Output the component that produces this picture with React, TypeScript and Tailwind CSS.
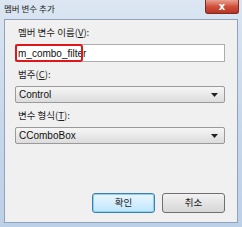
import React from 'react';

const kr = { fontFamily: '"Noto Sans CJK KR", "Noto Sans", sans-serif' };
const latin = { fontFamily: '"Liberation Sans", Arial, sans-serif' };

function Combo({ value }: { value: string }) {
  return (
    <div className="h-[17px] w-[210px] rounded-[2px] border border-[#9a9a9a] bg-gradient-to-b from-[#f6f6f6] to-[#dcdcdc] flex items-center justify-between pl-[3px] pr-[6px]">
      <span className="text-[10px] leading-[13px] text-[#111]" style={latin}>{value}</span>
      <svg width="7" height="4" viewBox="0 0 7 4">
        <path d="M0 0 H7 L3.5 4 Z" fill="#222" />
      </svg>
    </div>
  );
}

export default function App() {
  return (
    <div className="w-[242px] h-[227px] flex flex-col bg-gradient-to-b from-[#dbe6f2] via-[#c9d8eb] to-[#bcd0e8] overflow-hidden" style={kr}>
      {/* Title bar */}
      <div className="h-[19px] flex items-start justify-between pl-[4px] pr-[3px]">
        <span className="text-[8.5px] leading-[17px] text-[#1a1a1a]">멤버 변수 추가</span>
        <div className="w-[34px] h-[14px] rounded-b-[3px] border border-[#7a2a20] border-t-0 bg-gradient-to-b from-[#e8a090] via-[#d0503c] to-[#b83422] flex items-center justify-center">
          <span className="text-white text-[10px] font-bold leading-none" style={{ fontFamily: '"DejaVu Sans", sans-serif' }}>x</span>
        </div>
      </div>

      {/* Client area */}
      <div className="flex-1 mx-[4px] mb-[4px] border border-[#8fa3bd] bg-[#f0f0f0] flex flex-col pl-[10px] pt-[5px]">
        <span className="text-[9.5px] leading-[15px] text-[#222] pl-[3px]">멤버 변수 이름(<u>V</u>):</span>
        <div className="mt-[4px] h-[18px] w-[210px] border border-[#abadb3] bg-white relative flex items-center">
          <div className="absolute left-[-1px] top-[-1px] h-[18px] w-[68px] rounded-[3px] border-2 border-[#e0161a]" />
          <span className="text-[10px] leading-[13px] text-[#111] pl-[2px]" style={latin}>m_combo_filter</span>
        </div>

        <span className="mt-[5px] text-[9.5px] leading-[15px] text-[#222] pl-[3px]">범주(<u>C</u>):</span>
        <div className="mt-[4px]">
          <Combo value="Control" />
        </div>

        <span className="mt-[5px] text-[9.5px] leading-[15px] text-[#222] pl-[3px]">변수 형식(<u>T</u>):</span>
        <div className="mt-[4px]">
          <Combo value="CComboBox" />
        </div>

        <div className="mt-auto mb-[9px] flex justify-end gap-[7px] pr-[12px]">
          <button className="w-[63px] h-[20px] rounded-[3px] border border-[#3c7fb1] bg-gradient-to-b from-[#eaf6fd] to-[#bee6fd] shadow-[inset_0_0_0_1px_#8fd0f0] text-[9.5px] text-[#222] leading-none">확인</button>
          <button className="w-[63px] h-[20px] rounded-[3px] border border-[#707070] bg-gradient-to-b from-[#f2f2f2] to-[#d6d6d6] text-[9.5px] text-[#222] leading-none">취소</button>
        </div>
      </div>
    </div>
  );
}
